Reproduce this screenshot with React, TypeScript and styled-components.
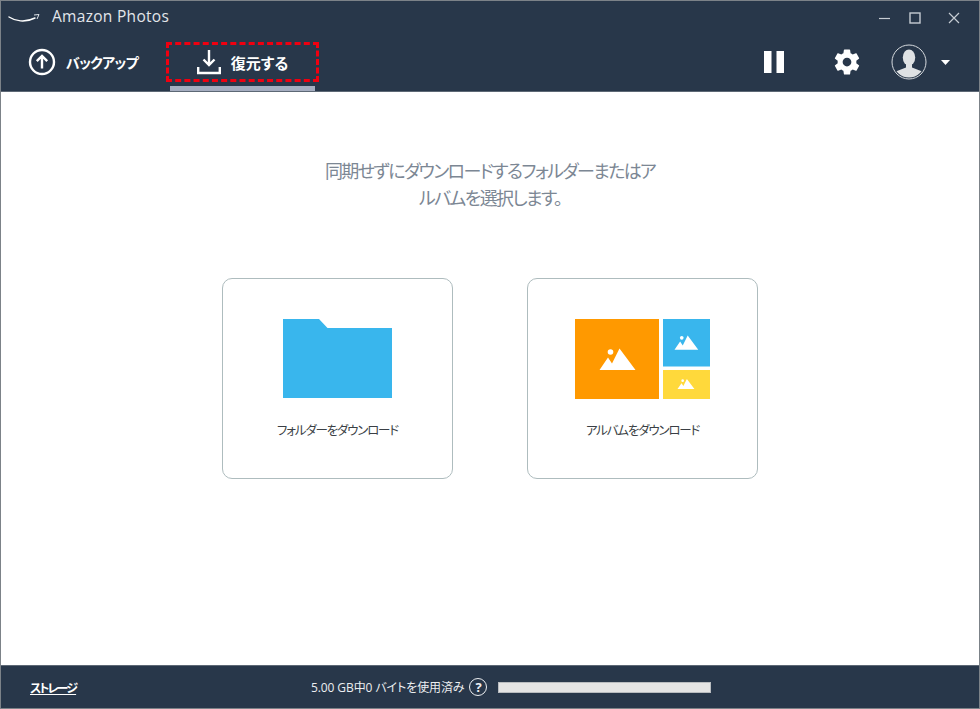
import React from "react";
import styled, { createGlobalStyle } from "styled-components";

const Global = createGlobalStyle`
  html, body { margin: 0; padding: 0; background: #fff; }
  body { font-family: "Open Sans", "Noto Sans CJK JP", sans-serif; }
  #root { width: 980px; height: 709px; overflow: hidden; }
`;

const cjk = `"Noto Sans CJK JP", sans-serif`;

const Window = styled.div`
  position: relative;
  width: 980px;
  height: 709px;
  box-sizing: border-box;
  border: 1px solid #7c8288;
  display: flex;
  flex-direction: column;
  background: #fff;
`;

const Header = styled.header`
  height: 90px;
  background: #28374a;
  display: flex;
  flex-direction: column;
  flex: none;
  border-bottom: 1px solid #5d6875;
`;

const TitleBar = styled.div`
  height: 30px;
  display: flex;
  align-items: center;
  padding: 0 19px 0 7px;
  flex: none;
`;

const Smile = styled.svg`
  margin-top: 5px;
`;

const TitleText = styled.span`
  margin-left: 12px;
  color: #e3e6ea;
  font: 400 15.5px "Open Sans", sans-serif;
  letter-spacing: 0.3px;
`;

const WindowControls = styled.div`
  margin-left: auto;
  display: flex;
  align-items: center;
  color: #c6ccd3;
  padding-top: 4px;
  & > svg:nth-child(1) { margin-right: 18px; }
  & > svg:nth-child(2) { margin-right: 27px; }
`;

const NavRow = styled.div`
  flex: 1;
  display: flex;
  align-items: stretch;
  padding-left: 27px;
`;

const Tab = styled.div<{ $width: number; $active?: boolean }>`
  width: ${(p) => p.$width}px;
  box-sizing: border-box;
  display: flex;
  align-items: center;
  justify-content: ${(p) => (p.$active ? "center" : "flex-start")};
  gap: ${(p) => (p.$active ? 10 : 10)}px;
  padding-top: 7px;
  border-bottom: 5px solid ${(p) => (p.$active ? "#a5adc0" : "transparent")};
  color: #fff;
  font: 700 ${(p) => (p.$active ? 15 : 14)}px ${cjk};
  font-feature-settings: "palt";
  letter-spacing: ${(p) => (p.$active ? 0 : -0.7)}px;
`;

const NavActions = styled.div`
  margin-left: auto;
  display: flex;
  align-items: center;
  padding: 2px 29px 0 0;
  color: #fff;
`;

const Spacer = styled.span<{ $w: number }>`
  width: ${(p) => p.$w}px;
`;

const Annotation = styled.div`
  position: absolute;
  left: 165px;
  top: 41px;
  width: 153px;
  height: 40px;
  box-sizing: border-box;
  border: 3px dashed #f00010;
`;

const Main = styled.main`
  flex: 1;
  display: flex;
  flex-direction: column;
  align-items: center;
  padding-top: 65px;
`;

const Prompt = styled.p`
  margin: 0;
  width: 332px;
  text-align: center;
  color: #7c8794;
  font: 400 18px/27px ${cjk};
  font-feature-settings: "palt";
  letter-spacing: -1.65px;
`;

const Cards = styled.div`
  margin-top: 67px;
  display: flex;
  gap: 74px;
`;

const Card = styled.div`
  width: 231px;
  height: 201px;
  box-sizing: border-box;
  border: 1px solid #aebcbe;
  border-radius: 10px;
  display: flex;
  flex-direction: column;
  align-items: center;
  padding-top: 40px;
`;

const Art = styled.div`
  height: 81px;
  display: flex;
  align-items: flex-start;
`;

const CardLabel = styled.span`
  margin-top: 20px;
  color: #3a3f45;
  font: 400 12.5px/20px ${cjk};
  font-feature-settings: "palt";
  letter-spacing: -1.2px;
`;

const Footer = styled.footer`
  flex: none;
  height: 42px;
  background: #28374a;
  border-top: 1px solid #5d6875;
  display: flex;
  align-items: center;
  padding-left: 29px;
  color: #e6e9ec;
`;

const StorageLink = styled.a`
  width: 281px;
  color: #fff;
  font: 700 12px ${cjk};
  font-feature-settings: "palt";
  letter-spacing: -1.9px;
  text-decoration: underline;
`;

const Usage = styled.span`
  font: 400 12px "Open Sans", "Noto Sans CJK JP", sans-serif;
  font-feature-settings: "palt";
  letter-spacing: -0.1px;
  color: #eceef0;
`;

const Help = styled.span`
  margin-left: 5px;
  width: 16px;
  height: 16px;
  border: 1.5px solid #eef0f2;
  border-radius: 50%;
  display: flex;
  align-items: center;
  justify-content: center;
  color: #eef0f2;
  font: 700 13px "Open Sans", sans-serif;
`;

const Meter = styled.div`
  margin-left: 11px;
  width: 213px;
  height: 11px;
  box-sizing: border-box;
  background: #e4e4e4;
  border: 1px solid #b9bcbf;
`;

const Logo = () => (
  <Smile width="32" height="14" viewBox="0 0 32 14" fill="none">
    <path d="M1 5c6 4 16 6 26 1" stroke="#fff" strokeWidth="1.4" strokeLinecap="round" />
    <path d="M26 3l5-.5-2 4.500" stroke="#dfe3e8" strokeWidth="1" fill="none" />
  </Smile>
);

const UploadIcon = () => (
  <svg width="28" height="28" viewBox="0 0 28 28" fill="none" stroke="#fff" strokeWidth="2.4">
    <circle cx="14" cy="14" r="12" />
    <path d="M14 20.500V8M8.800 13.200L14 8l5.200 5.200" />
  </svg>
);

const DownloadIcon = () => (
  <svg width="24" height="26" viewBox="0 0 24 26" fill="none" stroke="#fff" strokeWidth="2.4">
    <path d="M12 1v15M6.500 10.500L12 16l5.500-5.500" />
    <path d="M1.200 18v6h21.600v-6" />
  </svg>
);

const Pause = () => (
  <svg width="20" height="22" viewBox="0 0 20 22" fill="#fff">
    <rect x="0" y="0" width="7.500" height="22" />
    <rect x="12.500" y="0" width="7.500" height="22" />
  </svg>
);

const Gear = () => (
  <svg width="30" height="30" viewBox="0 0 24 24" fill="#fff">
    <path d="M19.430 12.980c.04-.32.07-.64.07-.98s-.03-.66-.07-.98l2.110-1.650c.19-.15.24-.42.12-.64l-2-3.460c-.12-.22-.39-.3-.61-.22l-2.490 1c-.52-.4-1.080-.73-1.690-.98l-.38-2.650C14.460 2.180 14.250 2 14 2h-4c-.25 0-.46.18-.49.42l-.38 2.650c-.61.25-1.170.59-1.690.98l-2.490-1c-.23-.09-.49 0-.61.22l-2 3.460c-.13.22-.07.49.12.64l2.110 1.650c-.04.32-.07.65-.07.98s.03.66.07.98l-2.110 1.650c-.19.15-.24.42-.12.64l2 3.460c.12.22.39.3.61.22l2.490-1c.52.4 1.080.73 1.690.98l.38 2.650c.03.24.24.42.49.42h4c.25 0 .46-.18.49-.42l.38-2.650c.61-.25 1.170-.59 1.690-.98l2.490 1c.23.09.49 0 .61-.22l2-3.460c.12-.22.07-.49-.12-.64l-2.110-1.650zM12 15.500c-1.930 0-3.500-1.570-3.500-3.500s1.570-3.500 3.500-3.500 3.500 1.570 3.500 3.500-1.570 3.500-3.500 3.500z" />
  </svg>
);

const Avatar = () => (
  <svg width="36" height="36" viewBox="0 0 36 36">
    <defs>
      <clipPath id="avatar-clip"><circle cx="18" cy="18" r="15.500" /></clipPath>
    </defs>
    <circle cx="18" cy="18" r="17" fill="#28374a" stroke="#d6dade" strokeWidth="1" />
    <g clipPath="url(#avatar-clip)" fill="#dfe2e4">
      <ellipse cx="18" cy="13.500" rx="6.200" ry="8" />
      <path d="M15 20h6v3.500l9 3.500c3 1.200 4 4 4 9H2c0-5 1-7.800 4-9l9-3.500z" />
    </g>
  </svg>
);

const Caret = () => (
  <svg width="9" height="5" viewBox="0 0 9 5" fill="#fff"><path d="M0 0h9L4.500 5z" /></svg>
);

const Folder = () => (
  <svg width="110" height="80" viewBox="0 0 110 80">
    <path d="M0 0h36l8.500 9H109v70H0z" fill="#39b6ed" />
  </svg>
);

const Mountains = ({ x, y, s }: { x: number; y: number; s: number }) => (
  <g transform={`translate(${x} ${y}) scale(${s})`} fill="#fff">
    <circle cx="11" cy="3.500" r="2.800" />
    <path d="M0 21.500L8.500 9l4 6L20 0l16 21.500z" />
  </g>
);

const AlbumArt = () => (
  <svg width="136" height="81" viewBox="0 0 136 81">
    <rect x="0" y="0" width="84" height="80" fill="#ff9900" />
    <rect x="88" y="0" width="47" height="47.500" fill="#39b6ed" />
    <rect x="88" y="51" width="47" height="29" fill="#ffd93b" />
    <Mountains x={24.500} y={29.500} s={1} />
    <Mountains x={99.500} y={16.500} s={0.66} />
    <Mountains x={102.500} y={60} s={0.47} />
  </svg>
);

export default function App() {
  return (
    <>
      <Global />
      <Window>
        <Header>
          <TitleBar>
            <Logo />
            <TitleText>Amazon Photos</TitleText>
            <WindowControls>
              <svg width="12" height="12" viewBox="0 0 12 12" stroke="currentColor" strokeWidth="1.200"><path d="M0 6.500h11" /></svg>
              <svg width="12" height="12" viewBox="0 0 12 12" fill="none" stroke="currentColor" strokeWidth="1.400"><rect x="1" y="1" width="10" height="10" /></svg>
              <svg width="12" height="12" viewBox="0 0 12 12" stroke="currentColor" strokeWidth="1.200"><path d="M1 1l10 10M11 1L1 11" /></svg>
            </WindowControls>
          </TitleBar>
          <NavRow>
            <Tab $width={142}>
              <UploadIcon />
              バックアップ
            </Tab>
            <Tab $width={145} $active>
              <DownloadIcon />
              復元する
            </Tab>
            <NavActions>
              <Pause />
              <Spacer $w={48} />
              <Gear />
              <Spacer $w={29} />
              <Avatar />
              <Spacer $w={14} />
              <Caret />
            </NavActions>
          </NavRow>
        </Header>
        <Annotation />
        <Main>
          <Prompt>同期せずにダウンロードするフォルダーまたはアルバムを選択します。</Prompt>
          <Cards>
            <Card>
              <Art><Folder /></Art>
              <CardLabel>フォルダーをダウンロード</CardLabel>
            </Card>
            <Card>
              <Art><AlbumArt /></Art>
              <CardLabel>アルバムをダウンロード</CardLabel>
            </Card>
          </Cards>
        </Main>
        <Footer>
          <StorageLink>ストレージ</StorageLink>
          <Usage>5.00 GB中0 バイトを使用済み</Usage>
          <Help>?</Help>
          <Meter />
        </Footer>
      </Window>
    </>
  );
}
